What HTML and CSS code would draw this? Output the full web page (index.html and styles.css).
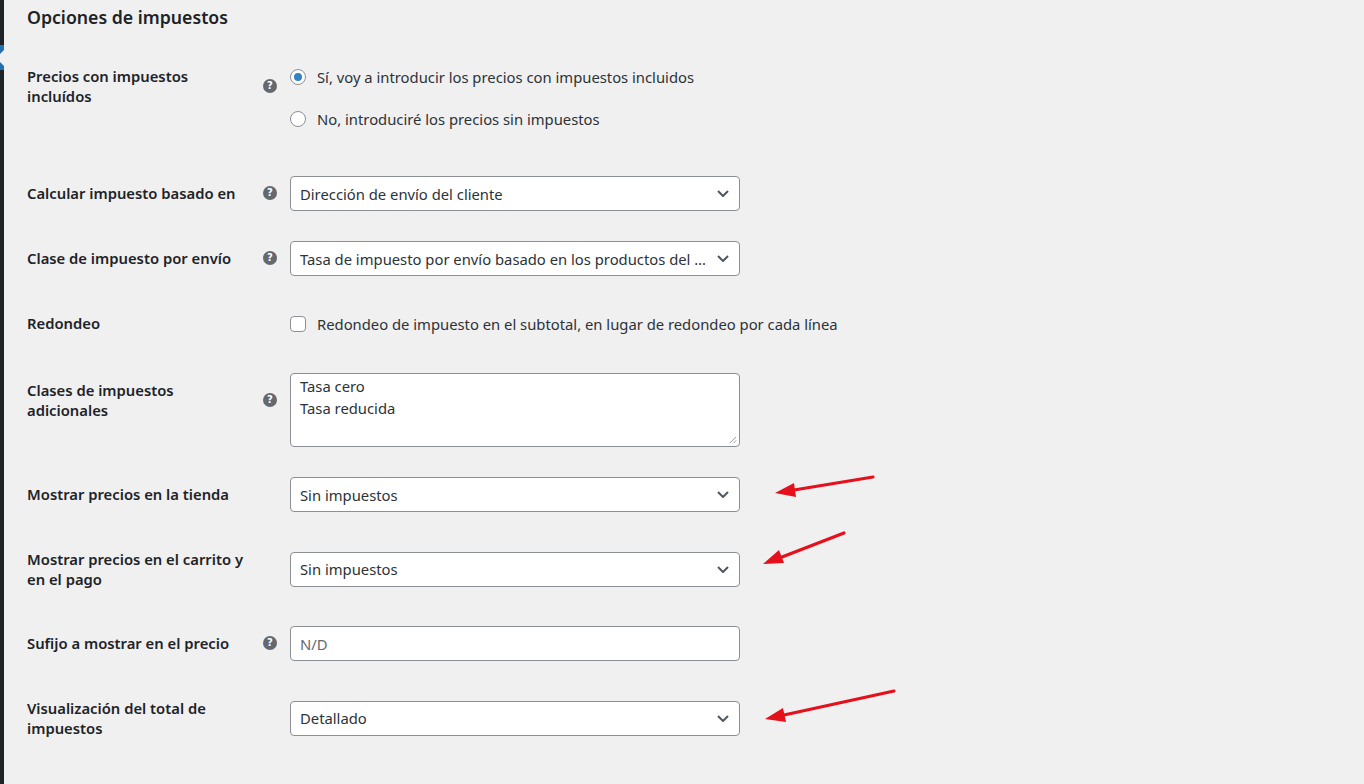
FILE: index.html
```html
<html lang="es">

<head>
  <meta charset="utf-8">
  <title>Opciones de impuestos</title>
  <link rel="stylesheet" href="styles.css">
</head>

<body>

  <div class="page">
    <div class="adminmenu">
      <div class="current"></div>
    </div>

    <div class="content">
      <h2>Opciones de impuestos</h2>

      <table class="form-table">
        <tr class="row-radios">
          <th><div class="label"><span>Precios con impuestos incluídos</span><i class="tip">?</i></div></th>
          <td>
            <ul class="radios">
              <li><span class="radio checked"></span>Sí, voy a introducir los precios con impuestos incluidos</li>
              <li><span class="radio"></span>No, introduciré los precios sin impuestos</li>
            </ul>
          </td>
        </tr>
        <tr>
          <th><div class="label"><span>Calcular impuesto basado en</span><i class="tip">?</i></div></th>
          <td><div class="select"><span class="value">Dirección de envío del cliente</span><svg class="chev" viewBox="0 0 12 7"><path d="M1 1l5 5 5-5"/></svg></div></td>
        </tr>
        <tr>
          <th><div class="label"><span>Clase de impuesto por envío</span><i class="tip">?</i></div></th>
          <td><div class="select"><span class="value">Tasa de impuesto por envío basado en los productos del …</span><svg class="chev" viewBox="0 0 12 7"><path d="M1 1l5 5 5-5"/></svg></div></td>
        </tr>
        <tr class="row-check">
          <th><div class="label"><span>Redondeo</span></div></th>
          <td><label class="check"><span class="box"></span>Redondeo de impuesto en el subtotal, en lugar de redondeo por cada línea</label></td>
        </tr>
        <tr>
          <th><div class="label"><span>Clases de impuestos adicionales</span><i class="tip">?</i></div></th>
          <td><div class="textarea">Tasa cero<br>Tasa reducida<svg class="grip" viewBox="0 0 10 10"><path d="M9 2L2 9M9 6L6 9"/></svg></div></td>
        </tr>
        <tr>
          <th><div class="label"><span>Mostrar precios en la tienda</span></div></th>
          <td><div class="select"><span class="value">Sin impuestos</span><svg class="chev" viewBox="0 0 12 7"><path d="M1 1l5 5 5-5"/></svg></div></td>
        </tr>
        <tr>
          <th><div class="label"><span>Mostrar precios en el carrito y en el pago</span></div></th>
          <td><div class="select"><span class="value">Sin impuestos</span><svg class="chev" viewBox="0 0 12 7"><path d="M1 1l5 5 5-5"/></svg></div></td>
        </tr>
        <tr>
          <th><div class="label"><span>Sufijo a mostrar en el precio</span><i class="tip">?</i></div></th>
          <td><div class="input placeholder">N/D</div></td>
        </tr>
        <tr>
          <th><div class="label"><span>Visualización del total de impuestos</span></div></th>
          <td><div class="select"><span class="value">Detallado</span><svg class="chev" viewBox="0 0 12 7"><path d="M1 1l5 5 5-5"/></svg></div></td>
        </tr>
      </table>
    </div>

    <!-- red annotation arrows drawn over the screenshot -->
    <svg class="marks" viewBox="0 0 1364 784">
      <g class="arrow">
        <line x1="873" y1="477" x2="794" y2="490"/>
        <polygon points="775,493 796,497 794,483"/>
      </g>
      <g class="arrow">
        <line x1="844" y1="533" x2="782" y2="557"/>
        <polygon points="763,564 784,563 779,550"/>
      </g>
      <g class="arrow">
        <line x1="894" y1="691" x2="784" y2="715"/>
        <polygon points="765,719 786,722 783,708"/>
      </g>
    </svg>
  </div>

</body>

</html>
```

FILE: styles.css
```css
html,
body {
  margin: 0;
  padding: 0;
  background-color: #f0f0f1;
  font-family: 'Noto Sans', 'Open Sans', sans-serif;
  color: #1d2327;
  font-size: 14.8px;
}

.page {
  position: relative;
  display: flex;
  min-height: 784px;
  overflow: hidden;
}

.adminmenu {
  flex: 0 0 4px;
  background-color: #1d2327;
  padding-top: 45px;
}

.adminmenu .current {
  position: relative;
  height: 25px;
  background-color: #2271b1;
}

.adminmenu .current:after {
  content: "";
  position: absolute;
  right: 0;
  top: 50%;
  margin-top: -8px;
  border: 8px solid transparent;
  border-right-color: #f0f0f1;
}

.content {
  flex: 1;
  padding-left: 23px;
}

h2 {
  font-size: 17.7px;
  font-weight: 600;
  line-height: 24px;
  margin: 5px 0 15px;
}

.form-table {
  border-collapse: collapse;
  border-spacing: 0;
  font-size: 14.8px;
  color: #1d2327;
}

.form-table th {
  width: 250px;
  padding: 22px 3px 22px 0;
  vertical-align: top;
  text-align: left;
  font-weight: 600;
  line-height: 20px;
}

.form-table td {
  padding: 15px 10px;
  vertical-align: middle;
}

.label {
  display: flex;
  align-items: center;
  justify-content: space-between;
}

.label span {
  flex: 0 0 222px;
}

.tip {
  width: 14px;
  height: 14px;
  border-radius: 50%;
  background-color: #646970;
  color: #fff;
  font-style: normal;
  font-weight: 700;
  font-size: 10px;
  line-height: 14px;
  text-align: center;
  font-family: 'DejaVu Sans', sans-serif;
}

/* radios */
.row-radios td {
  vertical-align: top;
  padding-top: 23px;
  padding-bottom: 32px;
}

.radios {
  list-style: none;
  margin: 0;
  padding: 0;
}

.radios li {
  display: flex;
  align-items: center;
  line-height: 20px;
  color: #2c3338;
}

.radios li + li {
  margin-top: 22px;
}

.radio,
.box {
  box-sizing: border-box;
  width: 16px;
  height: 16px;
  border: 1px solid #8c8f94;
  background-color: #fff;
  margin-right: 11px;
  flex: 0 0 16px;
}

.radio {
  border-radius: 50%;
  display: flex;
  align-items: center;
  justify-content: center;
}

.radio.checked:before {
  content: "";
  width: 8px;
  height: 8px;
  border-radius: 50%;
  background-color: #3582c4;
}

.box {
  border-radius: 4px;
}

/* checkbox */
.row-check td {
  padding-top: 23px;
  padding-bottom: 24px;
}

.check {
  display: flex;
  align-items: center;
  line-height: 20px;
  color: #2c3338;
}

/* fields */
.select,
.input,
.textarea {
  box-sizing: border-box;
  width: 450px;
  background-color: #fff;
  border: 1px solid #8c8f94;
  border-radius: 4px;
  color: #2c3338;
}

.select,
.input {
  height: 35px;
  display: flex;
  align-items: center;
  padding: 0 10px 0 9px;
}

.select .value {
  flex: 1;
  white-space: nowrap;
  overflow: hidden;
  padding-right: 10px;
}

.chev {
  width: 12px;
  height: 7px;
  fill: none;
  stroke: #50575e;
  stroke-width: 2;
}

.placeholder {
  color: #646970;
}

.textarea {
  position: relative;
  height: 74px;
  padding: 1px 9px;
  line-height: 22px;
}

.grip {
  position: absolute;
  right: 2px;
  bottom: 2px;
  width: 9px;
  height: 9px;
  fill: none;
  stroke: #8c8f94;
  stroke-width: 1;
}

/* annotations */
.marks {
  position: absolute;
  left: 0;
  top: 0;
  width: 1364px;
  height: 784px;
  pointer-events: none;
}

.arrow line {
  stroke: #e4101b;
  stroke-width: 3.2;
  stroke-linecap: round;
}

.arrow polygon {
  fill: #e4101b;
}
```
